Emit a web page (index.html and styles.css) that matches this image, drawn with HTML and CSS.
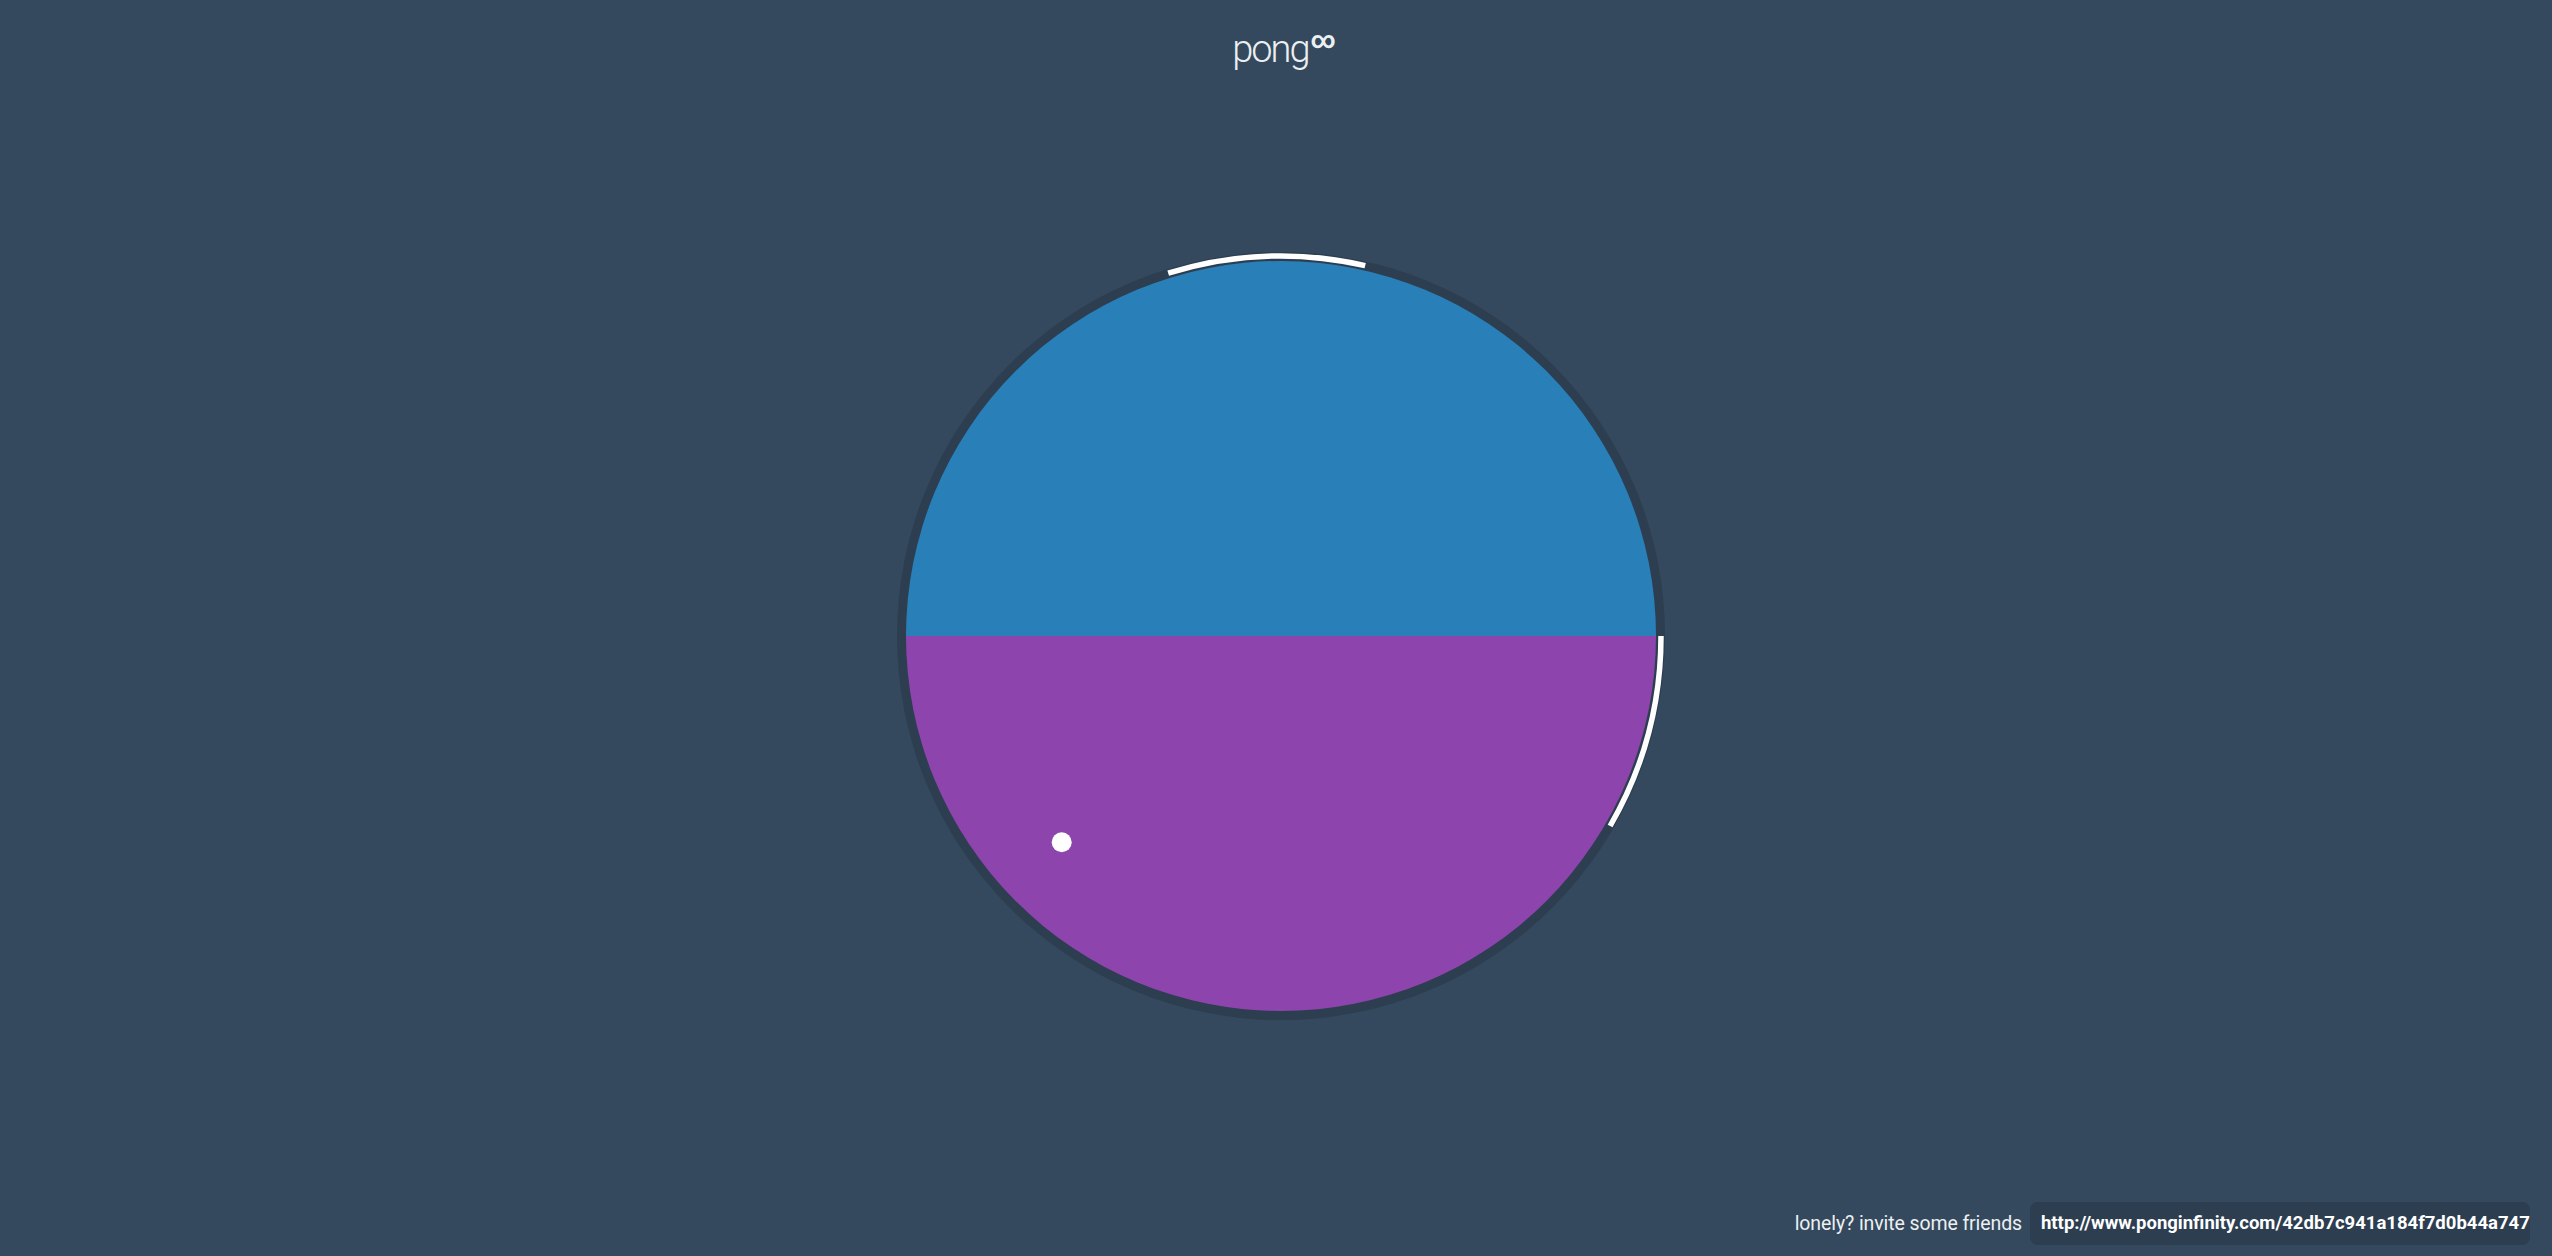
FILE: index.html
```html
<!DOCTYPE html>
<html lang="en">
<head>
<meta charset="utf-8">
<title>pong∞</title>
<link rel="stylesheet" href="styles.css">
</head>
<body>
<svg class="board" width="2552" height="1256" viewBox="0 0 2552 1256" xmlns="http://www.w3.org/2000/svg">
  <circle cx="1281" cy="636" r="384" fill="#2c3e50"/>
  <path d="M906 636 A375 375 0 0 1 1656 636 Z" fill="#2980b9"/>
  <path d="M906 636 A375 375 0 0 0 1656 636 Z" fill="#8e44ad"/>
  <path d="M1168.2 273.2 A380 380 0 0 1 1365.2 265.6" fill="none" stroke="#ffffff" stroke-width="5.5"/>
  <path d="M1661 636 A380 380 0 0 1 1610.1 826" fill="none" stroke="#ffffff" stroke-width="5.5"/>
  <circle cx="1061.7" cy="842.3" r="10" fill="#ffffff"/>
</svg>
<header class="top">
  <h1 class="title">pong<span class="inf">∞</span></h1>
</header>
<div class="spacer"></div>
<footer class="share">
  <span class="lonely">lonely? invite some friends</span>
  <div class="link-box">http://www.ponginfinity.com/42db7c941a184f7d0b44a74759e1c2a3</div>
</footer>
</body>
</html>
```

FILE: styles.css
```css
html, body {
  margin: 0;
  padding: 0;
}
body {
  width: 2552px;
  height: 1256px;
  overflow: hidden;
  background: #34495e;
  font-family: Roboto, "Liberation Sans", sans-serif;
  color: #ecf0f1;
  display: flex;
  flex-direction: column;
  position: relative;
}
.board {
  position: absolute;
  left: 0;
  top: 0;
}
.top {
  position: relative;
  display: flex;
  justify-content: center;
  padding-top: 18px;
  padding-left: 16px;
}
.title {
  margin: 0;
  font-size: 38px;
  line-height: 44px;
  font-weight: 300;
  letter-spacing: -2px;
  color: #ecf0f1;
}
.inf {
  font-size: 24px;
  font-weight: 700;
  letter-spacing: 0;
  vertical-align: 14px;
  margin-left: 2px;
}
.spacer {
  flex: 1;
}
.share {
  position: relative;
  display: flex;
  justify-content: flex-end;
  align-items: center;
  gap: 8px;
  padding: 0 22px 11px 0;
}
.lonely {
  font-size: 19.5px;
  color: #ecf0f1;
  letter-spacing: -0.1px;
}
.link-box {
  width: 489px;
  height: 43px;
  padding-left: 11px;
  border-radius: 8px;
  background: #2c3e50;
  color: #ffffff;
  font-size: 18.5px;
  font-weight: 700;
  line-height: 43px;
  white-space: nowrap;
  overflow: hidden;
}
```
